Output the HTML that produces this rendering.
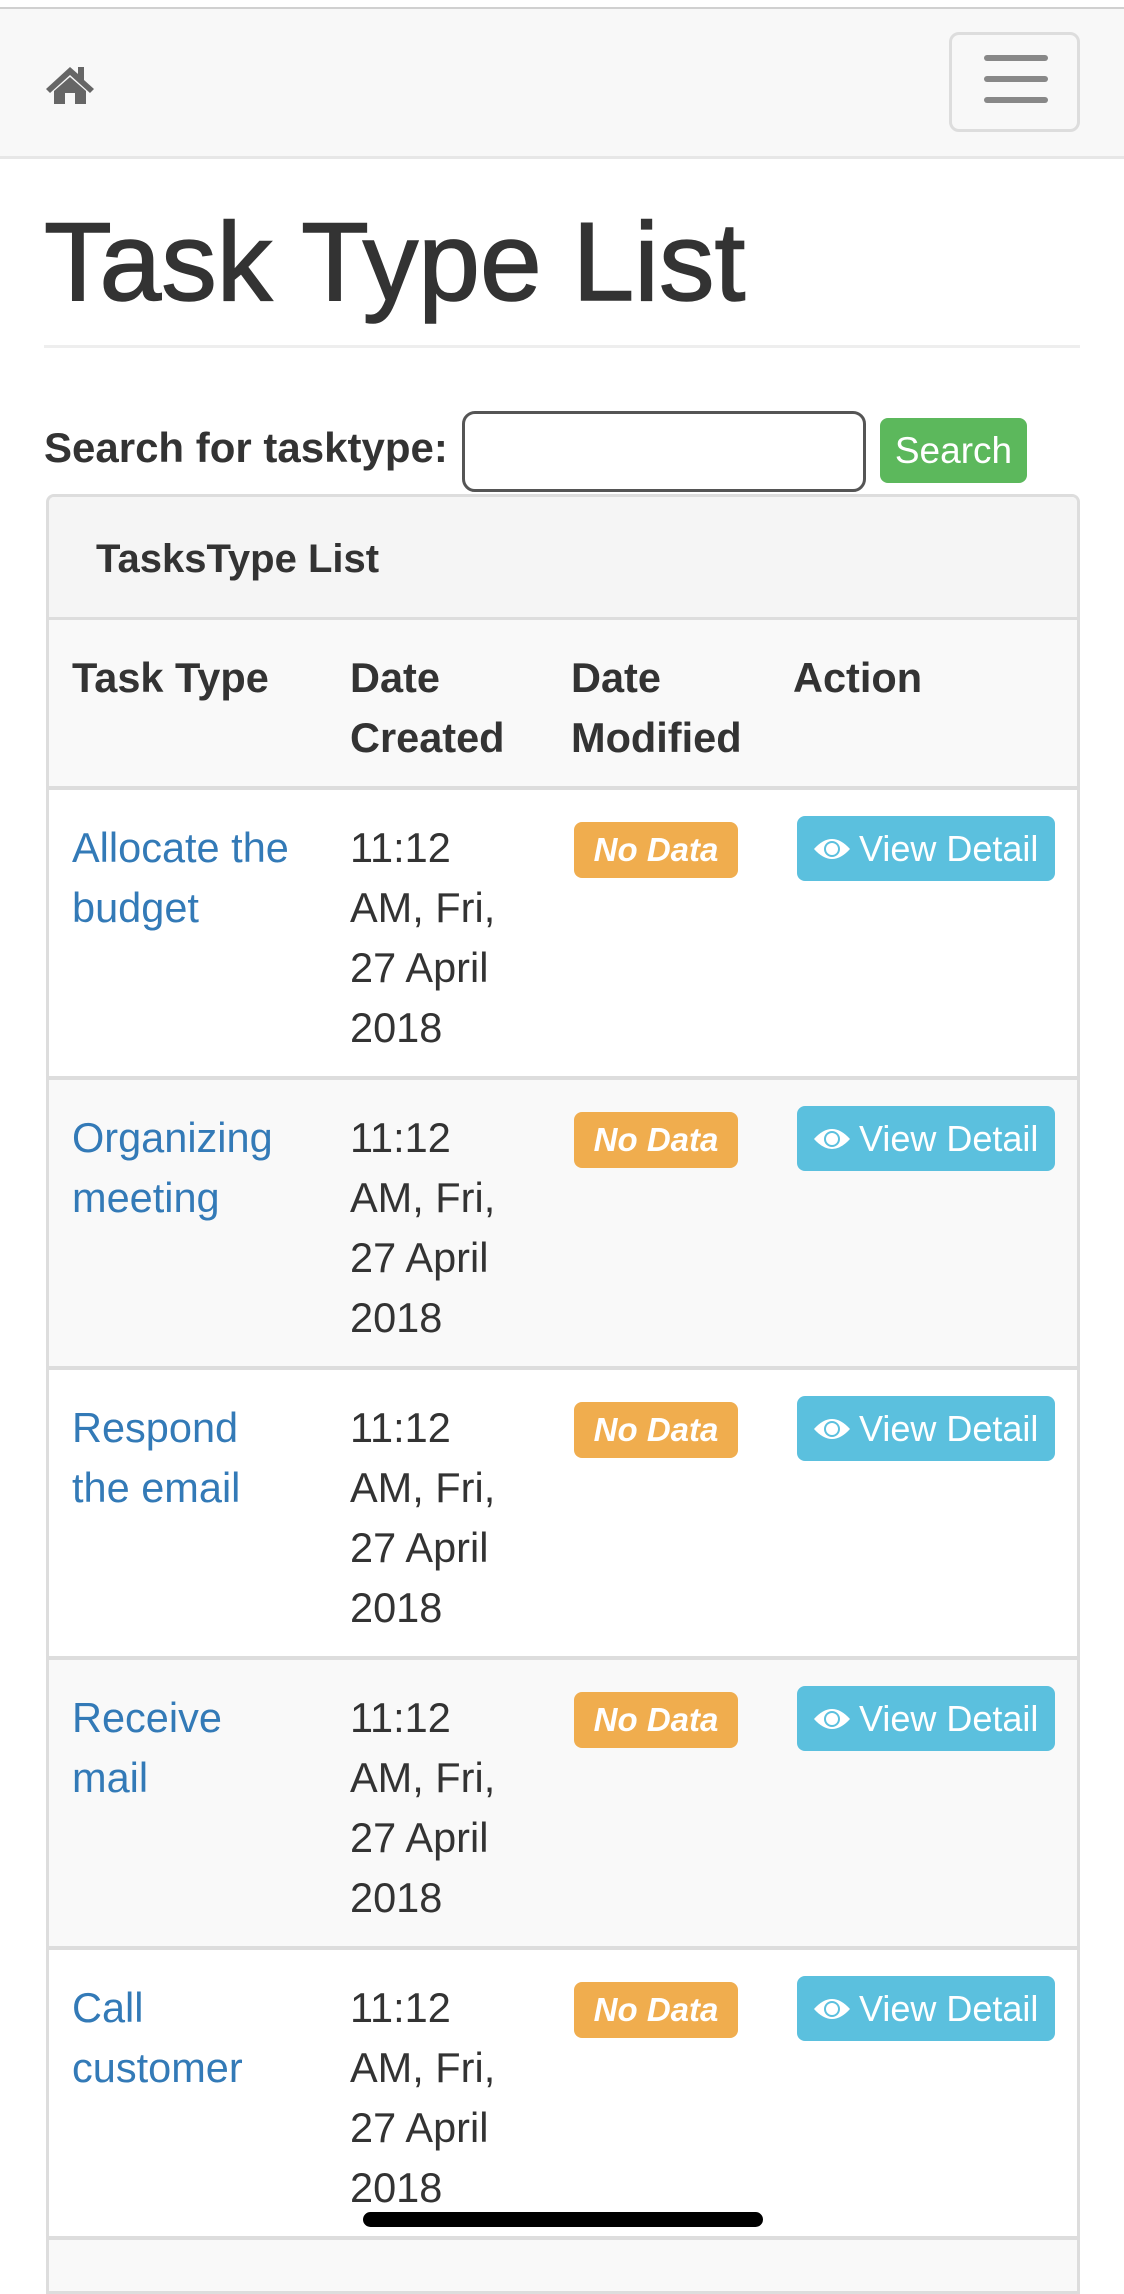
<!DOCTYPE html>
<html><head><meta charset="utf-8"><style>
*{margin:0;padding:0;box-sizing:border-box}
body{width:1124px;height:2252px;overflow:hidden;background:#fff;font-family:"Liberation Sans",Arial,sans-serif;color:#333;position:relative}
.abs{position:absolute}
.nav{left:0;top:7px;width:1124px;height:152px;background:#f8f8f8;border-top:2px solid #d0d0d0;border-bottom:3px solid #e7e7e7}
.tog{left:949px;top:23px;width:131px;height:100px;border:3px solid #ddd;border-radius:10px}
.bar{left:32px;width:64px;height:6px;background:#888;border-radius:3px}
h1{position:absolute;left:44px;top:200px;font-size:111px;font-weight:normal;line-height:124px;color:#333;white-space:nowrap;-webkit-text-stroke:1.5px #333}
.hr{left:44px;top:345px;width:1036px;height:3px;background:#eee}
.lbl{left:44px;top:420px;font-size:42px;font-weight:bold;line-height:56px;white-space:nowrap}
.inp{left:462px;top:411px;width:404px;height:81px;border:3px solid #555;border-radius:13px;background:#fff}
.btn{left:880px;top:418px;width:147px;height:65px;background:#5cb85c;border-radius:8px;color:#fff;font-size:37px;line-height:65px;text-align:center}
.panel{left:46px;top:494px;width:1034px;height:1800px;border:3px solid #ddd;border-radius:8px 8px 0 0;overflow:hidden}
.ph{left:0;top:0;width:100%;height:123px;background:#f5f5f5;border-bottom:3px solid #ddd}
.ph span{position:absolute;left:47px;top:40px;font-size:40px;font-weight:bold;line-height:44px}
.row{left:0;width:100%;border-bottom:4px solid #ddd}
.c{position:absolute;font-size:41.5px;line-height:60px;white-space:nowrap}
.lnk{color:#337ab7}
.badge{position:absolute;left:525px;width:164px;height:56px;background:#f0ad4e;border-radius:8px;color:#fff;font-weight:bold;font-style:italic;font-size:33px;line-height:56px;text-align:center}
.vd{position:absolute;left:748px;width:258px;height:65px;background:#5bc0de;border-radius:8px;color:#fff;font-size:36px;line-height:65px;white-space:nowrap}
.vd svg{position:absolute;left:16px;top:20px}
.vd span{position:absolute;left:62px;top:0}
.pill{left:363px;top:2212px;width:400px;height:15px;background:#000;border-radius:8px}
</style></head><body>
<div class="abs nav">
 <svg class="abs" style="left:45px;top:54px" width="50" height="42" viewBox="0 0 50 42">
  <path d="M25 4 L1 26 L5 30 L25 12 L45 30 L49 26 L39 17 V4 H33 V11 Z" fill="#666"/>
  <path d="M9 28 L25 14 L41 28 V41 H30 V30 H20 V41 H9 Z" fill="#666"/>
 </svg>
 <div class="abs tog">
  <div class="abs bar" style="top:20px"></div>
  <div class="abs bar" style="top:41px"></div>
  <div class="abs bar" style="top:62px"></div>
 </div>
</div>
<h1>Task Type List</h1>
<div class="abs hr"></div>
<div class="abs lbl">Search for tasktype:</div>
<div class="abs inp"></div>
<div class="abs btn">Search</div>
<div class="abs panel">
 <div class="abs ph"><span>TasksType List</span></div>
 <div class="abs row" style="top:123px;height:170px;background:#f9f9f9">
  <div class="c" style="left:23px;top:28px;font-weight:bold">Task Type</div>
  <div class="c" style="left:301px;top:28px;font-weight:bold">Date<br>Created</div>
  <div class="c" style="left:522px;top:28px;font-weight:bold">Date<br>Modified</div>
  <div class="c" style="left:744px;top:28px;font-weight:bold">Action</div>
 </div>
 <div class="abs row" style="top:293px;height:290px;background:#fff">
  <div class="c lnk" style="left:23px;top:28px">Allocate the<br>budget</div>
  <div class="c" style="left:301px;top:28px">11:12<br>AM, Fri,<br>27 April<br>2018</div>
  <div class="badge" style="top:32px">No Data</div>
  <div class="vd" style="top:26px"><svg width="38" height="26" viewBox="0 0 38 26"><path d="M1 13 Q19 -7 37 13 Q19 33 1 13 Z" fill="#fff"/><circle cx="19" cy="13" r="8" fill="#5bc0de"/><circle cx="19" cy="13" r="6" fill="#fff"/></svg><span>View Detail</span></div>
 </div>
 <div class="abs row" style="top:583px;height:290px;background:#f9f9f9">
  <div class="c lnk" style="left:23px;top:28px">Organizing<br>meeting</div>
  <div class="c" style="left:301px;top:28px">11:12<br>AM, Fri,<br>27 April<br>2018</div>
  <div class="badge" style="top:32px">No Data</div>
  <div class="vd" style="top:26px"><svg width="38" height="26" viewBox="0 0 38 26"><path d="M1 13 Q19 -7 37 13 Q19 33 1 13 Z" fill="#fff"/><circle cx="19" cy="13" r="8" fill="#5bc0de"/><circle cx="19" cy="13" r="6" fill="#fff"/></svg><span>View Detail</span></div>
 </div>
 <div class="abs row" style="top:873px;height:290px;background:#fff">
  <div class="c lnk" style="left:23px;top:28px">Respond<br>the email</div>
  <div class="c" style="left:301px;top:28px">11:12<br>AM, Fri,<br>27 April<br>2018</div>
  <div class="badge" style="top:32px">No Data</div>
  <div class="vd" style="top:26px"><svg width="38" height="26" viewBox="0 0 38 26"><path d="M1 13 Q19 -7 37 13 Q19 33 1 13 Z" fill="#fff"/><circle cx="19" cy="13" r="8" fill="#5bc0de"/><circle cx="19" cy="13" r="6" fill="#fff"/></svg><span>View Detail</span></div>
 </div>
 <div class="abs row" style="top:1163px;height:290px;background:#f9f9f9">
  <div class="c lnk" style="left:23px;top:28px">Receive<br>mail</div>
  <div class="c" style="left:301px;top:28px">11:12<br>AM, Fri,<br>27 April<br>2018</div>
  <div class="badge" style="top:32px">No Data</div>
  <div class="vd" style="top:26px"><svg width="38" height="26" viewBox="0 0 38 26"><path d="M1 13 Q19 -7 37 13 Q19 33 1 13 Z" fill="#fff"/><circle cx="19" cy="13" r="8" fill="#5bc0de"/><circle cx="19" cy="13" r="6" fill="#fff"/></svg><span>View Detail</span></div>
 </div>
 <div class="abs row" style="top:1453px;height:290px;background:#fff">
  <div class="c lnk" style="left:23px;top:28px">Call<br>customer</div>
  <div class="c" style="left:301px;top:28px">11:12<br>AM, Fri,<br>27 April<br>2018</div>
  <div class="badge" style="top:32px">No Data</div>
  <div class="vd" style="top:26px"><svg width="38" height="26" viewBox="0 0 38 26"><path d="M1 13 Q19 -7 37 13 Q19 33 1 13 Z" fill="#fff"/><circle cx="19" cy="13" r="8" fill="#5bc0de"/><circle cx="19" cy="13" r="6" fill="#fff"/></svg><span>View Detail</span></div>
 </div>
 <div class="abs row" style="top:1743px;height:100px;background:#f9f9f9;border:0"></div>
</div>
<div class="abs pill"></div>
</body></html>
